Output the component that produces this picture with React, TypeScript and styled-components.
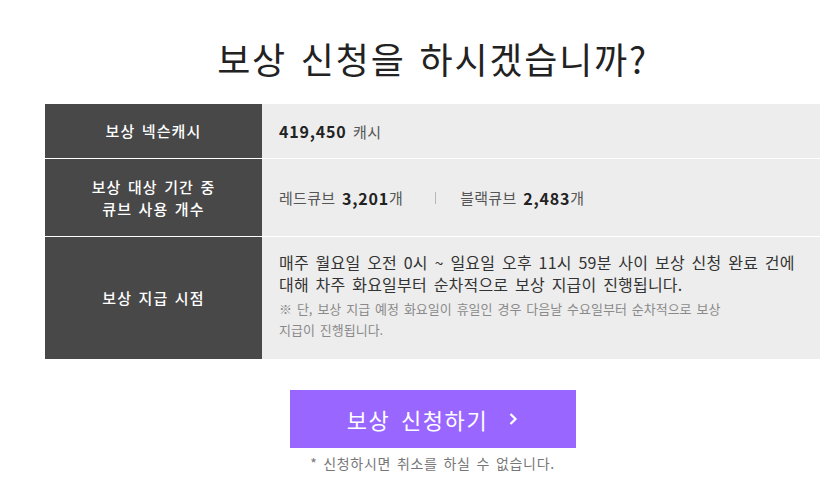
import styled, { createGlobalStyle } from 'styled-components'

const GlobalStyle = createGlobalStyle`
    body {
        margin: 0;
        background: #fff;
        font-family: 'Noto Sans CJK KR', 'Noto Sans', sans-serif;
    }
`

const Page = styled.div`
    width: 775px;
    margin-left: 45px;
    padding-top: 36px;
    display: flex;
    flex-flow: column;
    align-items: center;
`

const Title = styled.h1`
    margin: 0;
    font-size: 36px;
    line-height: 44px;
    font-weight: 400;
    color: #222;
    letter-spacing: 1.8px;
    word-spacing: 4px;
`

const Table = styled.div`
    width: 100%;
    margin-top: 24px;
    display: grid;
    grid-template-columns: 217px 1fr;
    row-gap: 1px;
    background: #fff;
`

interface CellProps {
    height: number;
}
const Head = styled.div<CellProps>`
    height: ${p => p.height}px;
    background-color: #484848;
    color: #fff;
    font-size: 15px;
    font-weight: 500;
    line-height: 22px;
    letter-spacing: 1.1px;
    word-spacing: 2px;
    display: flex;
    align-items: center;
    justify-content: center;
    text-align: center;
`
const Value = styled.div<CellProps>`
    height: ${p => p.height}px;
    background-color: #ededed;
    color: #555;
    font-size: 15px;
    letter-spacing: 0.3px;
    word-spacing: 3px;
    padding-left: 17px;
    display: flex;
    align-items: center;
    box-sizing: border-box;
    white-space: pre;
`
const Num = styled.b`
    color: #222;
    font-size: 16px;
    font-weight: 700;
    letter-spacing: 0.8px;
`
const Divider = styled.span`
    width: 1px;
    height: 12px;
    background-color: #b8b8b8;
    margin: 0 24px 0 32px;
`
const Schedule = styled.div`
    display: flex;
    flex-flow: column;
    white-space: normal;
    margin-top: -6px;
`
const Main = styled.p`
    margin: 0;
    font-size: 16px;
    line-height: 22px;
    color: #333;
    letter-spacing: 0.2px;
    word-spacing: 3px;
`
const Note = styled.p`
    margin: 3px 0 0;
    font-size: 13px;
    line-height: 21px;
    color: #8a8a8a;
    letter-spacing: 0;
    word-spacing: 2px;
`

const Button = styled.button`
    margin-top: 31px;
    width: 286px;
    height: 58px;
    border: none;
    background-color: #9966ff;
    color: #fff;
    font-family: inherit;
    font-size: 22px;
    letter-spacing: 1.6px;
    word-spacing: 4px;
    display: flex;
    align-items: center;
    justify-content: center;
    gap: 20px;
    cursor: pointer;
`
const Caution = styled.p`
    margin: 6px 0 0;
    font-size: 14px;
    line-height: 18px;
    color: #777;
    letter-spacing: 0.7px;
    word-spacing: 2px;
`

const Chevron = () => (
    <svg width="10" height="14" viewBox="0 0 10 14">
        <path d="M2.5 2 L7.5 7 L2.5 12" fill="none" stroke="#fff" strokeWidth="2.2" />
    </svg>
)

export default function App() {
    return (
        <Page>
            <GlobalStyle />
            <Title>보상 신청을 하시겠습니까?</Title>
            <Table>
                <Head height={54}>보상 넥슨캐시</Head>
                <Value height={54}><Num>419,450</Num> 캐시</Value>
                <Head height={77}>보상 대상 기간 중<br />큐브 사용 개수</Head>
                <Value height={77}>
                    레드큐브 <Num>3,201</Num>개
                    <Divider />
                    블랙큐브 <Num>2,483</Num>개
                </Value>
                <Head height={122}>보상 지급 시점</Head>
                <Value height={122}>
                    <Schedule>
                        <Main>매주 월요일 오전 0시 ~ 일요일 오후 11시 59분 사이 보상 신청 완료 건에<br />대해 차주 화요일부터 순차적으로 보상 지급이 진행됩니다.</Main>
                        <Note>※ 단, 보상 지급 예정 화요일이 휴일인 경우 다음날 수요일부터 순차적으로 보상<br />지급이 진행됩니다.</Note>
                    </Schedule>
                </Value>
            </Table>
            <Button>보상 신청하기 <Chevron /></Button>
            <Caution>* 신청하시면 취소를 하실 수 없습니다.</Caution>
        </Page>
    )
}
